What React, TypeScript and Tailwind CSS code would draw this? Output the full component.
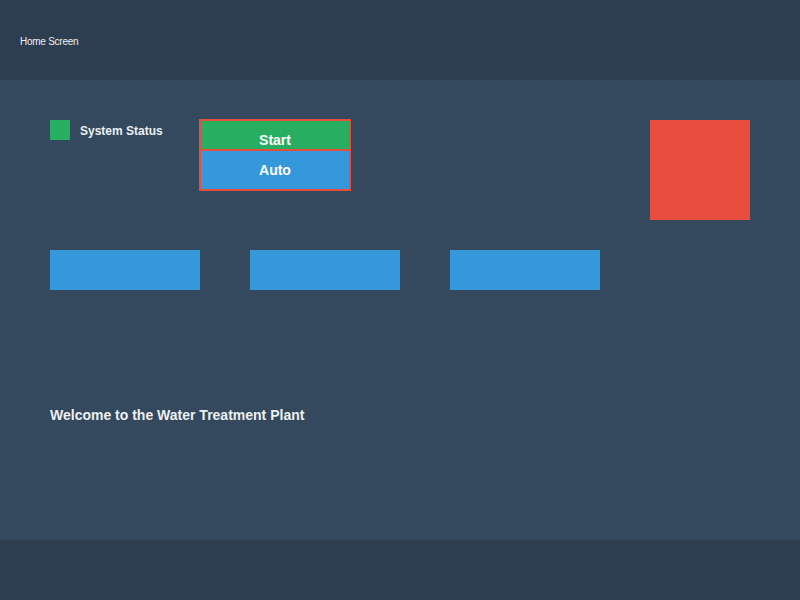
export default function App() {
  return (
    <div className="w-[800px] h-[600px] flex flex-col bg-[#34495e] font-['Liberation_Sans',Arial,sans-serif] text-white">
      <header className="h-[80px] shrink-0 bg-[#2c3e50] flex items-center px-[20px] pt-[4px]">
        <span className="text-[10px] leading-[12px] tracking-[-0.25px] text-[#ecf0f1]">Home Screen</span>
      </header>
      <main className="h-[460px] shrink-0 pt-[40px] pl-[50px] pr-[50px] flex flex-col">
        <div className="flex items-start">
          <div className="w-[149px] flex items-center gap-[10px]">
            <div className="w-[20px] h-[20px] bg-[#27ae60]" />
            <span className="mt-[2px] text-[12px] leading-[14px] font-bold text-[#ecf0f1]">System Status</span>
          </div>
          <div className="mt-[-1px] w-[152px] border-2 border-[#e74c3c] flex flex-col">
            <button className="h-[28px] bg-[#27ae60] flex items-end justify-center pb-[1px] text-[14px] leading-[16px] font-bold text-white">
              Start
            </button>
            <div className="h-[2px] bg-[#e74c3c]" />
            <button className="h-[38px] bg-[#3498db] flex items-center justify-center text-[14px] leading-[16px] font-bold text-white">
              Auto
            </button>
          </div>
          <div className="ml-auto w-[100px] h-[100px] bg-[#e74c3c]" />
        </div>
        <div className="mt-[30px] flex gap-[50px]">
          <div className="w-[150px] h-[40px] bg-[#3498db]" />
          <div className="w-[150px] h-[40px] bg-[#3498db]" />
          <div className="w-[150px] h-[40px] bg-[#3498db]" />
        </div>
        <p className="mt-[117px] text-[14px] leading-[16px] font-bold text-[#ecf0f1]">
          Welcome to the Water Treatment Plant
        </p>
      </main>
      <footer className="h-[60px] shrink-0 bg-[#2c3e50]" />
    </div>
  );
}
